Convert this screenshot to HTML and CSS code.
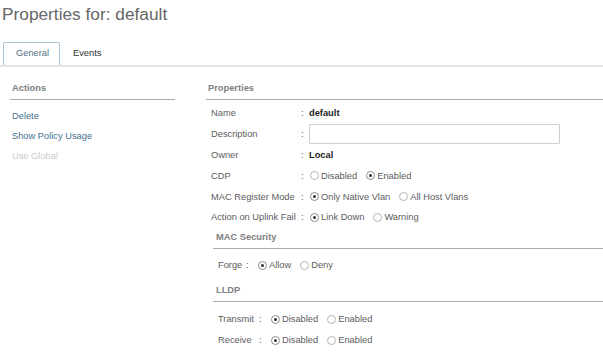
FILE: index.html
```html
<!DOCTYPE html>
<html lang="en">
<head>
    <meta charset="UTF-8">
    <title>Properties for: default</title>
    <link rel="stylesheet" href="styles.css">
</head>
<body>
    <h1 class="title">Properties for: default</h1>

    <div class="tabs">
        <div class="tab active">General</div>
        <div class="tab">Events</div>
    </div>

    <div class="content">
        <div class="actions">
            <div class="section-head">Actions</div>
            <div class="action-list">
                <a class="action">Delete</a>
                <a class="action">Show Policy Usage</a>
                <a class="action disabled">Use Global</a>
            </div>
        </div>

        <div class="properties">
            <div class="section-head">Properties</div>
            <div class="prop-grid">
                <span class="label">Name</span><span class="colon">:</span>
                <span class="value strong">default</span>

                <span class="label">Description</span><span class="colon">:</span>
                <span class="value"><input class="text-input" type="text"></span>

                <span class="label">Owner</span><span class="colon">:</span>
                <span class="value strong">Local</span>

                <span class="label">CDP</span><span class="colon">:</span>
                <span class="value">
                    <span class="radio"></span><span class="opt">Disabled</span>
                    <span class="radio on"></span><span class="opt">Enabled</span>
                </span>

                <span class="label">MAC Register Mode</span><span class="colon">:</span>
                <span class="value">
                    <span class="radio on"></span><span class="opt">Only Native Vlan</span>
                    <span class="radio"></span><span class="opt">All Host Vlans</span>
                </span>

                <span class="label">Action on Uplink Fail</span><span class="colon">:</span>
                <span class="value">
                    <span class="radio on"></span><span class="opt">Link Down</span>
                    <span class="radio"></span><span class="opt">Warning</span>
                </span>
            </div>

            <div class="sub">
                <div class="section-head sub-head">MAC Security</div>
                <div class="sub-grid forge">
                    <span class="label">Forge</span><span class="colon">:</span>
                    <span class="value">
                        <span class="radio on"></span><span class="opt">Allow</span>
                        <span class="radio"></span><span class="opt">Deny</span>
                    </span>
                </div>
            </div>

            <div class="sub">
                <div class="section-head sub-head">LLDP</div>
                <div class="sub-grid lldp">
                    <span class="label">Transmit</span><span class="colon">:</span>
                    <span class="value">
                        <span class="radio on"></span><span class="opt">Disabled</span>
                        <span class="radio"></span><span class="opt">Enabled</span>
                    </span>

                    <span class="label">Receive</span><span class="colon">:</span>
                    <span class="value">
                        <span class="radio on"></span><span class="opt">Disabled</span>
                        <span class="radio"></span><span class="opt">Enabled</span>
                    </span>
                </div>
            </div>
        </div>
    </div>
</body>
</html>
```

FILE: styles.css
```css
body {
    margin: 0;
    font-family: "Liberation Sans", Arial, sans-serif;
    font-size: 9.3px;
    color: #5c5c5c;
    background-color: #fff;
}
.title {
    margin: 0;
    padding: 2px 0 0 2px;
    font-size: 17.3px;
    font-weight: normal;
    line-height: 24px;
    color: #666;
}
.tabs {
    display: flex;
    margin-top: 16px;
    padding-left: 3px;
    border-bottom: 2px solid #e6e6e6;
}
.tab {
    height: 22px;
    line-height: 21px;
    padding: 0 12px;
    color: #333;
    border: 1px solid transparent;
    border-bottom: none;
}
.tab.active {
    width: 31px;
    padding: 0 12px;
    color: #4f6f84;
    border-color: #a8c5d4;
    border-radius: 2px 2px 0 0;
}
.content {
    display: flex;
    gap: 31px;
    margin-top: 12px;
    padding-left: 10px;
}
.actions {
    width: 165px;
}
.properties {
    flex: 1;
}
.section-head {
    line-height: 18px;
    padding: 0 0 2px 2px;
    font-weight: bold;
    color: #808080;
    border-bottom: 1px solid #aaa;
}
.action-list {
    display: flex;
    flex-direction: column;
    padding-top: 6px;
}
.action {
    height: 20px;
    line-height: 20px;
    padding-left: 2px;
    color: #44708c;
}
.action.disabled {
    color: #cbcbcb;
}
.prop-grid {
    display: grid;
    grid-template-columns: 88px 10px 1fr;
    grid-auto-rows: 20.8px;
    align-items: center;
    padding: 3px 0 0 5px;
}
.colon {
    padding-left: 2px;
}
.value {
    display: flex;
    align-items: center;
}
.strong {
    font-weight: bold;
    color: #1c1c1c;
}
.text-input {
    width: 251px;
    height: 20px;
    box-sizing: border-box;
    margin: 0;
    border: 1px solid #cfcfcf;
    border-radius: 1px;
}
.radio {
    position: relative;
    width: 9px;
    height: 9px;
    box-sizing: border-box;
    border: 1px solid #b3b3b3;
    border-radius: 50%;
    margin: 0 2px 0 1px;
}
.radio.on {
    border-color: #8c8c8c;
}
.radio.on::after {
    content: "";
    position: absolute;
    left: 2px;
    top: 2px;
    width: 3px;
    height: 3px;
    border-radius: 50%;
    background-color: #333;
}
.opt {
    margin-right: 8px;
}
.sub {
    padding-left: 7px;
}
.sub-head {
    padding-left: 3px;
}
.sub-grid {
    display: grid;
    grid-auto-rows: 21px;
    align-items: center;
    padding-left: 5px;
}
.forge {
    grid-template-columns: 26px 13px 1fr;
    padding-top: 6px;
    padding-bottom: 5px;
}
.lldp {
    grid-template-columns: 39px 13px 1fr;
    padding-top: 7px;
}
```
